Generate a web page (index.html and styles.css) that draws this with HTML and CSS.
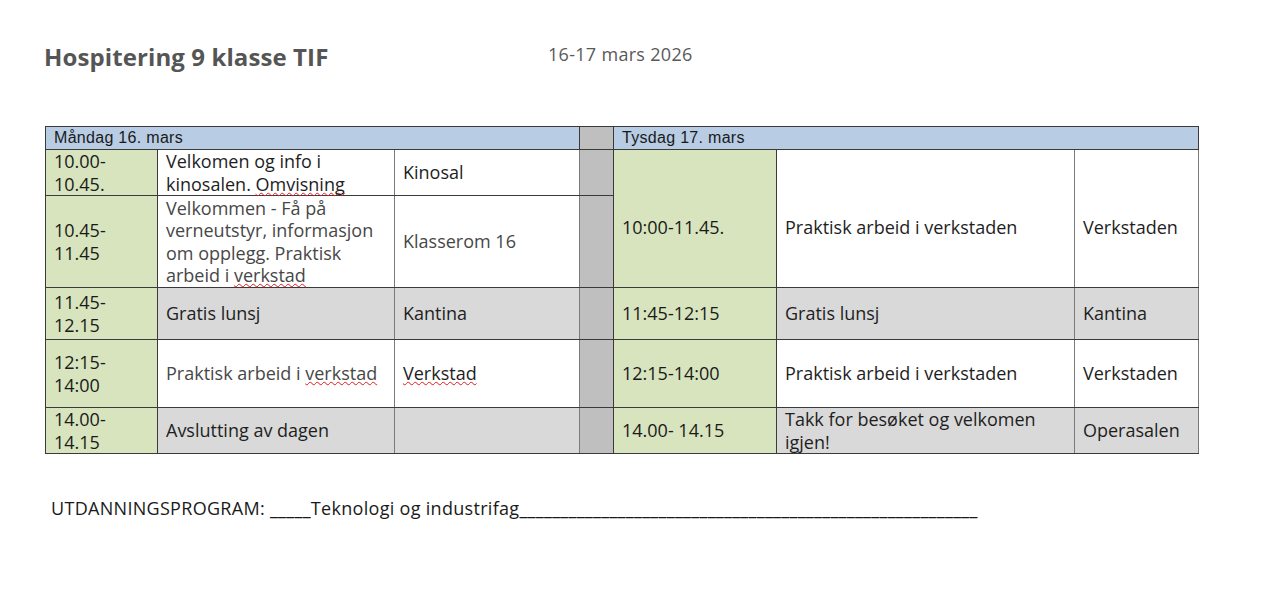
FILE: index.html
```html
<!DOCTYPE html>
<html lang="nn">
<head>
<meta charset="utf-8">
<title>Hospitering 9 klasse TIF</title>
<link rel="stylesheet" href="styles.css">
</head>
<body>
<div class="page">
  <header class="top">
    <h1 class="title">Hospitering 9 klasse TIF</h1>
    <div class="date">16-17 mars 2026</div>
  </header>

  <table class="plan">
    <colgroup>
      <col class="c-time1">
      <col class="c-desc1">
      <col class="c-loc1">
      <col class="c-gap">
      <col class="c-time2">
      <col class="c-desc2">
      <col class="c-loc2">
    </colgroup>
    <tr class="head">
      <th colspan="3" class="day">Måndag 16. mars</th>
      <td class="gap"></td>
      <th colspan="3" class="day">Tysdag 17. mars</th>
    </tr>
    <tr class="r1">
      <td class="time">10.00-<br>10.45.</td>
      <td class="desc">Velkomen og info i kinosalen. <span class="spell">Omvisning</span></td>
      <td class="loc">Kinosal</td>
      <td class="gap"></td>
      <td class="time merged" rowspan="2">10:00-11.45.</td>
      <td class="desc merged" rowspan="2">Praktisk arbeid i verkstaden</td>
      <td class="loc merged" rowspan="2">Verkstaden</td>
    </tr>
    <tr class="r2">
      <td class="time">10.45-<br>11.45</td>
      <td class="desc soft">Velkommen - Få på verneutstyr, informasjon om opplegg. Praktisk arbeid i <span class="spell">verkstad</span></td>
      <td class="loc soft">Klasserom 16</td>
      <td class="gap"></td>
    </tr>
    <tr class="r3 grey">
      <td class="time">11.45-<br>12.15</td>
      <td class="desc">Gratis lunsj</td>
      <td class="loc">Kantina</td>
      <td class="gap"></td>
      <td class="time">11:45-12:15</td>
      <td class="desc">Gratis lunsj</td>
      <td class="loc">Kantina</td>
    </tr>
    <tr class="r4">
      <td class="time">12:15-<br>14:00</td>
      <td class="desc soft">Praktisk arbeid i <span class="spell">verkstad</span></td>
      <td class="loc"><span class="spell">Verkstad</span></td>
      <td class="gap"></td>
      <td class="time">12:15-14:00</td>
      <td class="desc">Praktisk arbeid i verkstaden</td>
      <td class="loc">Verkstaden</td>
    </tr>
    <tr class="r5 grey">
      <td class="time">14.00-<br>14.15</td>
      <td class="desc">Avslutting av dagen</td>
      <td class="loc"></td>
      <td class="gap"></td>
      <td class="time">14.00- 14.15</td>
      <td class="desc">Takk for besøket og velkomen igjen!</td>
      <td class="loc">Operasalen</td>
    </tr>
  </table>

  <p class="program">UTDANNINGSPROGRAM: _____Teknologi og industrifag________________________________________________________</p>
</div>
</body>
</html>
```

FILE: styles.css
```css
* { box-sizing: border-box; }

html, body {
  margin: 0;
  padding: 0;
  background: #ffffff;
}

body {
  font-family: "Open Sans", "Liberation Sans", sans-serif;
  color: #1e1e1e;
}

.page {
  padding: 40px 0 0 44px;
}

.top {
  display: grid;
  grid-template-columns: 504px auto;
  align-items: start;
  height: 86px;
}

.title {
  margin: 0;
  font-size: 24px;
  font-weight: 700;
  color: #555555;
  line-height: 34px;
  letter-spacing: 0.1px;
}

.date {
  font-size: 18px;
  color: #595959;
  line-height: 28px;
  letter-spacing: 0.3px;
}

.plan {
  margin-left: 1px;
  border-collapse: collapse;
  table-layout: fixed;
  width: 1153px;
  font-size: 18px;
  line-height: 22.5px;
}

.c-time1 { width: 112px; }
.c-desc1 { width: 237px; }
.c-loc1 { width: 185px; }
.c-gap { width: 34px; }
.c-time2 { width: 163px; }
.c-desc2 { width: 298px; }
.c-loc2 { width: 124px; }

.plan td, .plan th {
  border: 1px solid #3a3a3a;
  padding: 0 8px;
  vertical-align: middle;
  text-align: left;
  font-weight: 400;
}

.plan .desc, .plan .loc {
  border-left-color: #7a7a7a;
  border-right-color: #7a7a7a;
}

.head th.day {
  background: #b8cce4;
  font-family: "Liberation Sans", sans-serif;
  font-size: 16px;
  letter-spacing: 0.3px;
  height: 23px;
  line-height: 20px;
  padding: 0 8px;
  color: #1a1a1a;
}

.plan td.gap {
  background: #bfbfbf;
  border-left-color: #7a7a7a;
  padding: 0;
}

.plan td.time {
  background: #d7e4bd;
  color: #1a1a1a;
}

.plan td.merged {
  padding-top: 18px;
}

.grey .desc, .grey .loc {
  background: #d9d9d9;
}

.r1 td { height: 45px; }
.r2 td { height: 92px; }
.r3 td { height: 52px; }
.r4 td { height: 68px; }
.r5 td { height: 43px; }

.soft { color: #474747; }

.spell {
  text-decoration: underline wavy #e0191e;
  text-decoration-thickness: 1px;
  text-underline-offset: 1px;
  text-decoration-skip-ink: none;
}

.program {
  margin: 42px 0 0 7px;
  font-size: 18px;
  color: #1a1a1a;
  letter-spacing: 0.3px;
}
```
